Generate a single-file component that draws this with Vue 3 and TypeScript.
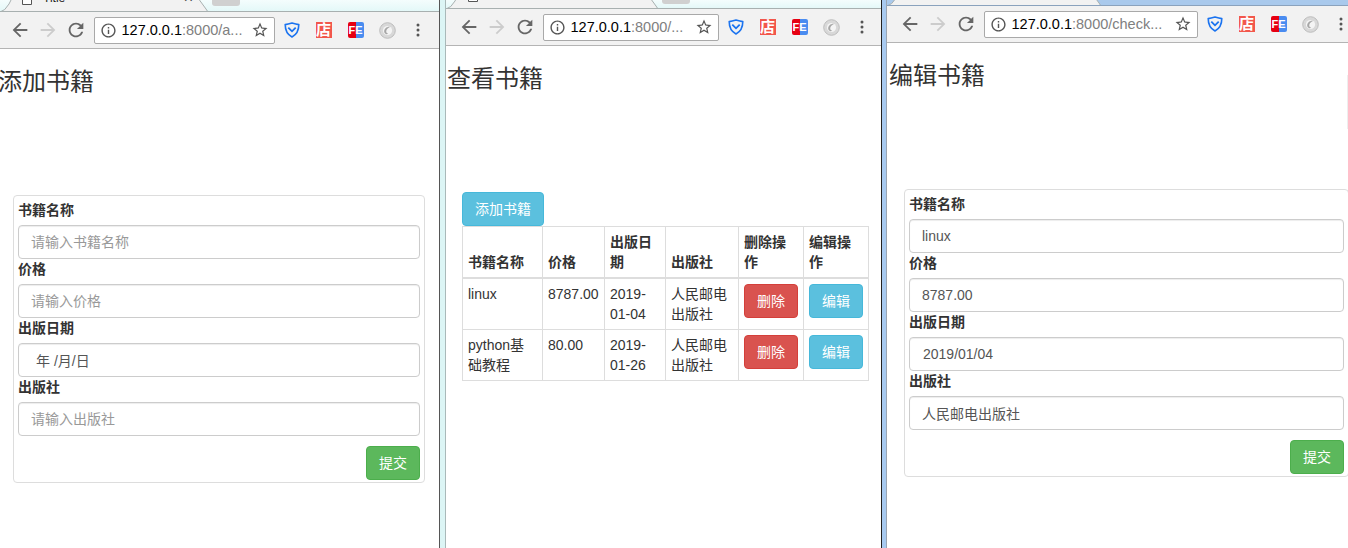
<script setup lang="ts">
interface Field {
  label: string
  placeholder?: string
  value?: string
  date?: boolean
  dateValue?: boolean
}

const addFields: Field[] = [
  { label: '书籍名称', placeholder: '请输入书籍名称' },
  { label: '价格', placeholder: '请输入价格' },
  { label: '出版日期', value: '年 /月/日', date: true },
  { label: '出版社', placeholder: '请输入出版社' },
]
const editFields: Field[] = [
  { label: '书籍名称', value: 'linux' },
  { label: '价格', value: '8787.00' },
  { label: '出版日期', value: '2019/01/04', dateValue: true },
  { label: '出版社', value: '人民邮电出版社' },
]
const books = [
  { name: 'linux', price: '8787.00', date: '2019-01-04', press: '人民邮电出版社' },
  { name: 'python基础教程', price: '80.00', date: '2019-01-26', press: '人民邮电出版社' },
]
const headers = ['书籍名称', '价格', '出版日期', '出版社', '删除操作', '编辑操作']

const windows = [
  { id: 'a', host: '127.0.0.1', rest: ':8000/a...', tabWidth: 210, title: '添加书籍', fields: addFields },
  { id: 'b', host: '127.0.0.1', rest: ':8000/...', tabWidth: 214, title: '查看书籍', fields: null },
  { id: 'c', host: '127.0.0.1', rest: ':8000/check...', tabWidth: 216, title: '编辑书籍', fields: editFields },
]

const tabPath = (w: number): string =>
  `M0 30 Q5 29 9 22 L12 16 V0 H${w - 12} V16 L${w - 4} 27 Q${w - 3} 30 ${w} 30 Z`
</script>

<template>
  <div class="desktop">
    <template v-for="(win, i) in windows" :key="win.id">
      <div v-if="i > 0" class="gap" :class="'gap-' + win.id"></div>
      <section class="win" :class="'win-' + win.id">
        <div class="strip">
          <div class="tab" :style="{ width: win.tabWidth + 'px' }">
            <svg class="tab-shape" :width="win.tabWidth" height="30">
              <path :d="tabPath(win.tabWidth)" fill="#f2f2f2" stroke="#a8b0b0" stroke-width="1" />
            </svg>
            <svg class="page" width="12" height="16" viewBox="0 0 12 16">
              <path d="M1.5.5h9v15h-9z" fill="#fff" stroke="#555" />
            </svg>
            <span class="tab-title">Title</span>
            <span class="tab-x">×</span>
          </div>
          <div class="newtab"></div>
        </div>

        <div class="toolbar">
          <svg class="nav" width="22" height="22" viewBox="0 0 24 24">
            <path fill="#666" d="M20 11H7.83l5.59-5.59L12 4l-8 8 8 8 1.41-1.41L7.83 13H20v-2z" />
          </svg>
          <svg class="nav" width="22" height="22" viewBox="0 0 24 24">
            <path fill="#ccc" d="M12 4l-1.41 1.41L16.17 11H4v2h12.17l-5.58 5.59L12 20l8-8z" />
          </svg>
          <svg class="nav" width="22" height="22" viewBox="0 0 24 24">
            <path fill="#666" d="M17.65 6.35C16.2 4.9 14.21 4 12 4c-4.42 0-7.99 3.58-7.99 8s3.57 8 7.99 8c3.73 0 6.84-2.55 7.73-6h-2.08c-.82 2.33-3.04 4-5.65 4-3.31 0-6-2.69-6-6s2.69-6 6-6c1.66 0 3.14.69 4.22 1.78L13 11h7V4l-2.35 2.35z" />
          </svg>
          <div class="omni">
            <svg width="17" height="17" viewBox="0 0 24 24">
              <path fill="#555" d="M11 7h2v2h-2zm0 4h2v6h-2zm1-9C6.48 2 2 6.48 2 12s4.48 10 10 10 10-4.48 10-10S17.52 2 12 2zm0 18c-4.41 0-8-3.59-8-8s3.59-8 8-8 8 3.59 8 8-3.59 8-8 8z" />
            </svg>
            <span class="url"><span class="host">{{ win.host }}</span>{{ win.rest }}</span>
            <svg width="18" height="18" viewBox="0 0 24 24">
              <path fill="#555" d="M22 9.24l-7.19-.62L12 2 9.19 8.63 2 9.24l5.46 4.73L5.82 21 12 17.27 18.18 21l-1.63-7.03L22 9.24zM12 15.4l-3.76 2.27 1-4.28-3.32-2.88 4.38-.38L12 6.1l1.71 4.04 4.38.38-3.32 2.88 1 4.28L12 15.4z" />
            </svg>
          </div>
          <div class="ext">
            <svg width="16" height="16" viewBox="0 0 16 16">
              <path d="M8 15C4 13 1.2 9.5 1.2 2.6 3.5 2.2 5.8 1.6 8 1c2.2.6 4.5 1.200 6.800 1.600C14.800 9.500 12 13 8 15z" fill="none" stroke="#1a73f0" stroke-width="1.6" stroke-linejoin="round" />
              <path d="M4.300 5.600 8 9.300l3.700-3.700" fill="none" stroke="#1a73f0" stroke-width="1.800" />
            </svg>
          </div>
          <div class="ext"><span class="shop">店</span></div>
          <div class="ext"><span class="fe">FE</span></div>
          <div class="ext">
            <svg width="17" height="17" viewBox="0 0 17 17">
              <circle cx="8.500" cy="8.500" r="7.800" fill="#d8d8d8" stroke="#bdbdbd" />
              <circle cx="8.500" cy="8.500" r="4.600" fill="#f4f4f4" />
              <path d="M11.500 4.800C8 4.200 5 6.500 5.200 9.800c.2 2 2.400 3 4 2-1.500-.3-2.200-1.600-1.900-3 .3-1.800 2-3.200 4.200-4z" fill="#a6a6a6" />
            </svg>
          </div>
          <svg class="dots" width="4" height="14" viewBox="0 0 4 14">
            <circle cx="2" cy="2" r="1.500" fill="#555" />
            <circle cx="2" cy="7" r="1.500" fill="#555" />
            <circle cx="2" cy="12" r="1.500" fill="#555" />
          </svg>
        </div>

        <div class="page-body">
          <h3>{{ win.title }}</h3>

          <div v-if="win.fields" class="card">
            <template v-for="f in win.fields" :key="f.label">
              <label>{{ f.label }}</label>
              <input
                class="control"
                :class="{ 'control-date': f.date, 'control-date-value': f.dateValue }"
                type="text"
                :placeholder="f.placeholder"
                :value="f.value"
              />
            </template>
            <div class="actions"><button class="btn success" type="button">提交</button></div>
          </div>

          <div v-else class="list">
            <button class="btn info add" type="button">添加书籍</button>
            <table>
              <colgroup>
                <col class="c1" /><col class="c2" /><col class="c3" /><col class="c4" /><col class="c5" /><col class="c6" />
              </colgroup>
              <thead>
                <tr><th v-for="h in headers" :key="h">{{ h }}</th></tr>
              </thead>
              <tbody>
                <tr v-for="b in books" :key="b.name">
                  <td>{{ b.name }}</td>
                  <td>{{ b.price }}</td>
                  <td>{{ b.date }}</td>
                  <td>{{ b.press }}</td>
                  <td><button class="btn danger" type="button">删除</button></td>
                  <td><button class="btn info" type="button">编辑</button></td>
                </tr>
              </tbody>
            </table>
          </div>
          <div v-if="win.id === 'c'" class="edge"></div>
        </div>
      </section>
    </template>
  </div>
</template>

<style scoped>
* {
  box-sizing: border-box;
}
.desktop {
  width: 1348px;
  height: 548px;
  display: flex;
  overflow: hidden;
  background: #fff;
  color: #333;
  font: 14px/20px "Liberation Sans", "Noto Sans CJK SC", sans-serif;
}
.gap {
  flex: none;
  height: 100%;
}
.gap-b {
  width: 6px;
  background: #dcf5f5;
  border-right: 1px solid #a9b9b9;
}
.gap-c {
  width: 5px;
  background: #a8caf0;
  border-right: 1px solid #9aa6b4;
}
.win {
  flex: none;
  height: 100%;
  position: relative;
  display: flex;
  flex-direction: column;
}
.win-a {
  width: 443px;
  margin-left: -3px;
  border-right: 1px solid #555;
}
.win-b {
  width: 436px;
  border-right: 1px solid #222;
}
.win-c {
  width: 470px;
}

/* tab strip */
.strip {
  flex: none;
  display: flex;
  align-items: flex-end;
  overflow: hidden;
  background: linear-gradient(#f4fdfd, #e4f8f8);
  border-bottom: 1px solid #a8b0b0;
}
.win-a .strip {
  height: 12px;
  padding-left: 3px;
}
.win-b .strip {
  height: 9px;
}
.win-c .strip {
  height: 6px;
  background: #a9c9ec;
  border-bottom-color: #8aa2bd;
}
.tab {
  flex: none;
  height: 30px;
  margin-bottom: -1px;
  position: relative;
  display: flex;
  align-items: flex-end;
  padding: 0 0 7px 21px;
}
.tab-shape {
  position: absolute;
  left: 0;
  top: 0;
}
.page {
  position: relative;
  flex: none;
}
.tab-title {
  position: relative;
  margin-left: 10px;
  font-size: 12px;
  line-height: 14px;
  color: #222;
}
.tab-x {
  position: absolute;
  right: 17px;
  bottom: 7px;
  font-size: 16px;
  line-height: 14px;
  color: #444;
}
.newtab {
  flex: none;
  width: 28px;
  height: 30px;
  margin: 0 0 1px 2px;
  background: #d0d0d0;
  border-radius: 0 0 3px 3px;
  align-self: flex-end;
}
.win-a .newtab {
  margin-bottom: 5px;
}
.win-b .newtab {
  margin-bottom: 4px;
}
.win-c .newtab {
  margin-bottom: 5px;
  background: #8fb0d6;
}

/* toolbar */
.toolbar {
  flex: none;
  height: 37px;
  display: flex;
  align-items: center;
  padding-left: 9px;
  background: #f2f2f2;
  border-bottom: 1px solid #b4b4b4;
}
.nav {
  flex: none;
  width: 22px;
  margin: 0 3px;
}
.omni {
  flex: none;
  height: 27px;
  margin: 0 1px 0 3.500px;
  display: flex;
  align-items: center;
  gap: 5px;
  padding: 0 5px 0 5px;
  background: #fff;
  border: 1px solid #a9a9a9;
  border-radius: 2px;
  white-space: nowrap;
  overflow: hidden;
}
.win-a .omni {
  width: 181px;
}
.win-b .omni {
  width: 176px;
}
.win-c .omni {
  width: 214px;
}
.url {
  flex: 1;
  min-width: 0;
  color: #808080;
  font-size: 14.500px;
}
.host {
  color: #000;
}
.ext {
  flex: none;
  width: 32px;
  display: flex;
  justify-content: center;
  align-items: center;
}
.shop {
  width: 16px;
  height: 16px;
  background: #f2574c;
  color: #fff;
  font-size: 15px;
  line-height: 16px;
  text-align: center;
  font-weight: 700;
}
.fe {
  width: 16px;
  height: 16px;
  border-radius: 2px;
  background: linear-gradient(90deg, #e60012 50%, #4a8cf0 50%);
  color: #fff;
  font-size: 11px;
  line-height: 16px;
  text-align: center;
  font-weight: 700;
}
.dots {
  flex: none;
  margin-left: 12px;
}

/* page */
.page-body {
  flex: 1;
  min-height: 0;
  background: #fff;
  position: relative;
}
h3 {
  margin: 20px 0 99.600px;
  padding-left: 1px;
  font-size: 24px;
  font-weight: 400;
  line-height: 26.400px;
  white-space: nowrap;
}
.win-c h3 {
  padding-left: 2px;
}
.card {
  padding: 4px 4px 2px;
  border: 1px solid #ddd;
  border-radius: 4px;
}
.win-a .card {
  width: 412px;
  margin-left: 16px;
}
.win-c .card {
  width: 445px;
  margin-left: 17px;
}
label {
  display: block;
  margin-bottom: 5px;
  font-weight: 700;
}
.control {
  display: block;
  width: 100%;
  height: 34px;
  padding: 6px 12px;
  border: 1px solid #ccc;
  border-radius: 4px;
  box-shadow: inset 0 1px 1px rgba(0, 0, 0, 0.075);
  color: #555;
  background: #fff;
  font: inherit;
  outline: none;
}
.control::placeholder {
  color: #999;
  opacity: 1;
}
.control-date {
  padding-left: 17px;
}
.control-date-value {
  padding-left: 13px;
}
.actions {
  display: flex;
  justify-content: flex-end;
  margin-top: 10px;
}
.btn {
  display: inline-block;
  height: 34px;
  padding: 6px 12px;
  border: 1px solid transparent;
  border-radius: 4px;
  color: #fff;
  font: inherit;
}
.success {
  background: #5cb85c;
  border-color: #4cae4c;
}
.info {
  background: #5bc0de;
  border-color: #46b8da;
}
.danger {
  background: #d9534f;
  border-color: #d43f3a;
}
.list {
  width: 407px;
  margin-left: 16px;
}
.add {
  display: block;
}
table {
  width: 406px;
  table-layout: fixed;
  border-collapse: collapse;
}
.c1 {
  width: 80px;
}
.c2 {
  width: 62px;
}
.c3 {
  width: 61px;
}
.c4 {
  width: 73px;
}
.c5 {
  width: 65px;
}
.c6 {
  width: 65px;
}
th,
td {
  padding: 5px;
  border: 1px solid #ddd;
  text-align: left;
  vertical-align: top;
}
th {
  vertical-align: bottom;
  border-bottom-width: 2px;
  font-weight: 700;
}
.edge {
  position: absolute;
  top: 32px;
  right: 9px;
  width: 1px;
  height: 54px;
  background: #eee;
}
</style>
